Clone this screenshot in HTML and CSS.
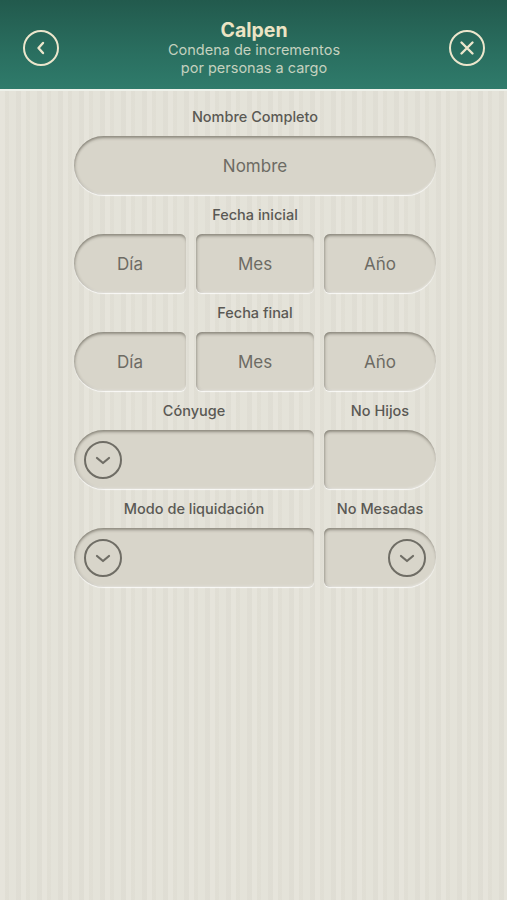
FILE: index.html
```html
<!DOCTYPE html>
<html lang="es">
<head>
    <meta charset="UTF-8">
    <meta name="viewport" content="width=device-width, initial-scale=1.0">
    <title>Calpen</title>
    <link rel="stylesheet" href="styles.css">
</head>
<body>

    <header class="topbar">
        <button class="round-btn" aria-label="Volver">
            <svg width="38" height="38" viewBox="0 0 38 38">
                <circle cx="19" cy="19" r="17" fill="none" stroke="#ece6cc" stroke-width="2"/>
                <path d="M21 14 L16.5 19 L21 24" fill="none" stroke="#ece6cc" stroke-width="2.4" stroke-linecap="round" stroke-linejoin="round"/>
            </svg>
        </button>
        <div class="title">
            <h1>Calpen</h1>
            <p>Condena de incrementos<br>por personas a cargo</p>
        </div>
        <button class="round-btn" aria-label="Cerrar">
            <svg width="38" height="38" viewBox="0 0 38 38">
                <circle cx="19" cy="19" r="17" fill="none" stroke="#ece6cc" stroke-width="2"/>
                <path d="M13.5 13.5 L24.5 24.5 M24.5 13.5 L13.5 24.5" fill="none" stroke="#ece6cc" stroke-width="2.4" stroke-linecap="round"/>
            </svg>
        </button>
    </header>

    <main class="form">
        <div class="group">
            <div class="labels"><span>Nombre Completo</span></div>
            <div class="row row-one">
                <div class="field pill">Nombre</div>
            </div>
        </div>

        <div class="group">
            <div class="labels"><span>Fecha inicial</span></div>
            <div class="row row-date">
                <div class="field left">Día</div>
                <div class="field">Mes</div>
                <div class="field right">Año</div>
            </div>
        </div>

        <div class="group">
            <div class="labels"><span>Fecha final</span></div>
            <div class="row row-date">
                <div class="field left">Día</div>
                <div class="field">Mes</div>
                <div class="field right">Año</div>
            </div>
        </div>

        <div class="group">
            <div class="labels row-split"><span>Cónyuge</span><span>No Hijos</span></div>
            <div class="row row-split">
                <div class="field left select">
                    <svg class="chev" width="40" height="40" viewBox="0 0 40 40">
                        <circle cx="20" cy="20" r="18" fill="none" stroke="#6f6d65" stroke-width="2"/>
                        <path d="M14 18 L20 23 L26 18" fill="none" stroke="#6f6d65" stroke-width="2.2" stroke-linecap="round" stroke-linejoin="round"/>
                    </svg>
                </div>
                <div class="field right"></div>
            </div>
        </div>

        <div class="group">
            <div class="labels row-split"><span>Modo de liquidación</span><span>No Mesadas</span></div>
            <div class="row row-split">
                <div class="field left select">
                    <svg class="chev" width="40" height="40" viewBox="0 0 40 40">
                        <circle cx="20" cy="20" r="18" fill="none" stroke="#6f6d65" stroke-width="2"/>
                        <path d="M14 18 L20 23 L26 18" fill="none" stroke="#6f6d65" stroke-width="2.2" stroke-linecap="round" stroke-linejoin="round"/>
                    </svg>
                </div>
                <div class="field right select end">
                    <svg class="chev" width="40" height="40" viewBox="0 0 40 40">
                        <circle cx="20" cy="20" r="18" fill="none" stroke="#6f6d65" stroke-width="2"/>
                        <path d="M14 18 L20 23 L26 18" fill="none" stroke="#6f6d65" stroke-width="2.2" stroke-linecap="round" stroke-linejoin="round"/>
                    </svg>
                </div>
            </div>
        </div>
    </main>

</body>
</html>
```

FILE: styles.css
```css
body {
    margin: 0;
    min-height: 100vh;
    font-family: Inter, "Open Sans", sans-serif;
    background-color: #e3e1d7;
    background-image: repeating-linear-gradient(90deg,
        rgba(255, 255, 255, 0.1) 0 5px,
        rgba(0, 0, 0, 0.01) 5px 9px,
        rgba(255, 255, 255, 0.05) 9px 16px,
        rgba(0, 0, 0, 0.014) 16px 21px);
}

/* green header */
.topbar {
    height: 89px;
    display: flex;
    align-items: center;
    justify-content: space-between;
    padding: 0 21px 0 22px;
    background: linear-gradient(180deg, #225a4d 0%, #2a6f60 60%, #2f7b6b 100%);
    border-bottom: 2px solid #eef1ea;
    box-sizing: content-box;
}

.round-btn {
    width: 38px;
    height: 38px;
    padding: 0;
    margin-top: 6px;
    border: none;
    background: none;
    display: flex;
}

.title {
    text-align: center;
    margin-top: 8px;
}

.title h1 {
    margin: 0;
    font-size: 19.5px;
    line-height: 21px;
    font-weight: 700;
    color: #ece4c4;
}

.title p {
    margin: 0;
    font-size: 14.5px;
    line-height: 18px;
    color: #c4d1bf;
}

/* form */
.form {
    width: 362px;
    margin-left: 74px;
    padding-top: 6px;
}

.labels {
    height: 39px;
    display: flex;
    justify-content: center;
    align-items: center;
    font-size: 14.5px;
    color: #5a5954;
    font-weight: 500;
}

.labels span {
    text-align: center;
}

.row {
    display: grid;
    gap: 10px;
    height: 59px;
}

.row-one {
    grid-template-columns: 1fr;
}

.row-date {
    grid-template-columns: 112px 118px 112px;
}

.row-split {
    display: grid;
    grid-template-columns: 240px 112px;
    gap: 10px;
}

.labels.row-split {
    height: 39px;
}

.field {
    background: #d8d5ca;
    border-radius: 6px;
    display: flex;
    align-items: center;
    justify-content: center;
    font-size: 17px;
    color: #6d6b64;
    box-shadow:
        inset 0 3px 3px -1px rgba(60, 55, 45, 0.45),
        inset 2px 0 3px -1px rgba(60, 55, 45, 0.3),
        inset 0 -2px 2px -1px rgba(255, 255, 255, 0.5),
        0 1px 1px rgba(255, 255, 255, 0.8);
}

.field.pill {
    border-radius: 30px;
}

.field.left {
    border-radius: 30px 6px 6px 30px;
}

.field.right {
    border-radius: 6px 30px 30px 6px;
}

.field.select {
    justify-content: flex-start;
    padding-left: 9px;
}

.field.select.end {
    justify-content: flex-end;
    padding-left: 0;
    padding-right: 9px;
}
```
